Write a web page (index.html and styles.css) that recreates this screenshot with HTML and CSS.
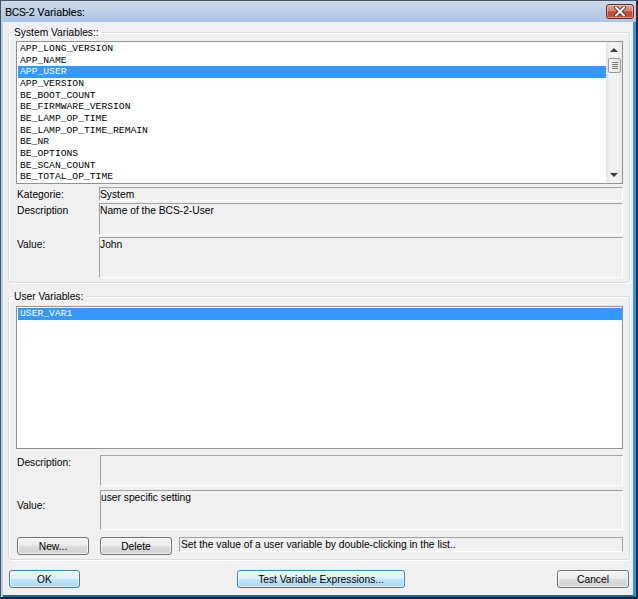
FILE: index.html
```html
<!DOCTYPE html>
<html>
<head>
<meta charset="utf-8">
<link rel="stylesheet" href="styles.css">
</head>
<body>
<div class="window">
  <div class="titlebar">
    <span class="title">BCS-2 Variables:</span>
    <span class="close">
      <svg width="12" height="11" viewBox="0 0 12 11">
        <path d="M2 1.5 L10 9.5 M10 1.5 L2 9.5" stroke="#4b1f18" stroke-width="3.6" stroke-linecap="square"/>
        <path d="M2 1.5 L10 9.5 M10 1.5 L2 9.5" stroke="#ffffff" stroke-width="2" stroke-linecap="square"/>
      </svg>
    </span>
  </div>
  <div class="client">
    <fieldset class="group group-sys">
      <legend>System Variables::</legend>
      <div class="listbox">
        <ul class="rows">
          <li>APP_LONG_VERSION</li>
          <li>APP_NAME</li>
          <li class="sel">APP_USER</li>
          <li>APP_VERSION</li>
          <li>BE_BOOT_COUNT</li>
          <li>BE_FIRMWARE_VERSION</li>
          <li>BE_LAMP_OP_TIME</li>
          <li>BE_LAMP_OP_TIME_REMAIN</li>
          <li>BE_NR</li>
          <li>BE_OPTIONS</li>
          <li>BE_SCAN_COUNT</li>
          <li>BE_TOTAL_OP_TIME</li>
        </ul>
        <div class="vscroll">
          <div class="sb-btn">
            <svg width="16" height="16" viewBox="0 0 16 16"><path d="M4 10 L8 6 L12 10 Z" fill="#3c3c3c"/></svg>
          </div>
          <div class="thumb">
            <svg width="8" height="9" viewBox="0 0 8 9">
              <path d="M1 1.5 H7 M1 3.5 H7 M1 5.5 H7 M1 7.5 H7" stroke="#7a7a7a" stroke-width="1"/>
            </svg>
          </div>
          <div class="track"></div>
          <div class="sb-btn">
            <svg width="16" height="16" viewBox="0 0 16 16"><path d="M4 6 L8 10 L12 6 Z" fill="#3c3c3c"/></svg>
          </div>
        </div>
      </div>
      <div class="props props-sys">
        <span class="lbl">Kategorie:</span>
        <div class="field">System</div>
        <span class="lbl">Description</span>
        <div class="field">Name of the BCS-2-User</div>
        <span class="lbl">Value:</span>
        <div class="field">John</div>
      </div>
    </fieldset>

    <fieldset class="group group-user">
      <legend>User Variables:</legend>
      <div class="listbox">
        <ul class="rows">
          <li class="sel">USER_VAR1</li>
        </ul>
      </div>
      <div class="props props-user">
        <span class="lbl">Description:</span>
        <div class="field"></div>
        <span class="lbl lbl-mid">Value:</span>
        <div class="field">user specific setting</div>
      </div>
      <div class="actions">
        <button class="btn btn-small">New...</button>
        <button class="btn btn-small">Delete</button>
        <div class="field hint">Set the value of a user variable by double-clicking in the list..</div>
      </div>
    </fieldset>

    <div class="dialog-buttons">
      <button class="btn btn-default btn-ok">OK</button>
      <button class="btn btn-default btn-test">Test Variable Expressions...</button>
      <button class="btn btn-cancel">Cancel</button>
    </div>
  </div>
</div>
</body>
</html>
```

FILE: styles.css
```css
* { box-sizing: border-box; }

html, body {
  margin: 0;
  padding: 0;
}

body {
  width: 638px;
  height: 599px;
  overflow: hidden;
  background: #ffffff;
  font-family: "Liberation Sans", Arial, sans-serif;
  font-size: 10.25px;
  color: #000000;
}

.window {
  width: 638px;
  height: 599px;
  display: flex;
  flex-direction: column;
  background: #b9cfe7;
  border: 1px solid #44566a;
  border-right: 2px solid #1a2c3e;
  border-bottom: 2px solid #15283b;
}

/* ---------- title bar ---------- */
.titlebar {
  flex: none;
  height: 21px;
  display: flex;
  justify-content: space-between;
  align-items: flex-start;
  padding: 0 2px 0 4px;
  background: linear-gradient(#cddbea 0%, #bdd1e7 45%, #aac5e3 100%);
}

.title {
  font-family: Roboto, "Liberation Sans", sans-serif;
  font-size: 11.5px;
  line-height: 21px;
  padding-top: 1px;
  letter-spacing: -0.3px;
  color: #000000;
}

.close {
  margin-top: 3px;
  width: 28px;
  height: 15px;
  display: flex;
  align-items: center;
  justify-content: center;
  border: 1px solid #6d2b22;
  border-radius: 3px;
  background: linear-gradient(#e6a596 0%, #d9806f 45%, #c4473a 52%, #c9553f 100%);
  box-shadow: inset 0 0 0 1px rgba(255, 225, 215, 0.45);
}

/* ---------- client area ---------- */
.client {
  flex: 1;
  margin-left: 2px;
  display: flex;
  flex-direction: column;
  background: #f0f0f0;
  border-right: 3px solid #2b97e2;
  border-bottom: 2px solid #23628f;
}

.group {
  margin: 4px 3px 0 5px;
  padding: 2px 6px 4px 7px;
  min-width: 0;
  border: 1px solid #d5dfe5;
  border-radius: 3px;
  box-shadow: inset 1px 1px 0 #ffffff, 1px 1px 0 #ffffff;
}

.group-user {
  margin-top: 7px;
  padding: 3px 6px 4px 7px;
}

.group legend {
  margin-left: -4px;
  padding: 0 2px;
  line-height: 13px;
  color: #000000;
}

/* ---------- list boxes ---------- */
.listbox {
  height: 143px;
  display: flex;
  background: #ffffff;
  border: 1px solid #8f9298;
}

.rows {
  flex: 1;
  margin: 0;
  padding: 1px 0 0 1px;
  list-style: none;
  overflow: hidden;
  font-family: "Liberation Mono", "Courier New", monospace;
  font-size: 9.7px;
}

.rows li {
  height: 11.67px;
  line-height: 11.67px;
  padding-left: 2px;
  white-space: nowrap;
  color: #000000;
}

.rows li.sel {
  background: #3399ff;
  color: #ffffff;
}

.vscroll {
  width: 16px;
  flex: none;
  display: flex;
  flex-direction: column;
  background: linear-gradient(to right, #e4e4e4 0%, #f1f1f1 25%, #f1f1f1 75%, #e9e9e9 100%);
}

.sb-btn {
  height: 16px;
  flex: none;
  display: flex;
}

.thumb {
  height: 15px;
  flex: none;
  margin: 0 1px 0 2px;
  display: flex;
  align-items: center;
  justify-content: center;
  border: 1px solid #9a9a9a;
  border-radius: 2px;
  background: linear-gradient(to right, #f6f6f6, #e2e2e2);
}

.track { flex: 1; }

/* ---------- property fields ---------- */
.props {
  display: grid;
  column-gap: 0;
}

.props-sys {
  margin-top: 3px;
  grid-template-columns: 83px 1fr;
  grid-template-rows: 14px 32px 41px;
  row-gap: 2px;
}

.props-user {
  margin-top: 6px;
  grid-template-columns: 84px 1fr;
  grid-template-rows: 31px 40px;
  row-gap: 4px;
}

.lbl {
  padding: 1px 0 0 1px;
  line-height: 13px;
  white-space: nowrap;
}

.lbl-mid { padding-top: 9px; }

.field {
  line-height: 13px;
  white-space: nowrap;
  overflow: hidden;
  border-top: 1px solid #a0a0a0;
  border-left: 1px solid #a0a0a0;
  border-bottom: 1px solid #ffffff;
  border-right: 1px solid #ffffff;
  background: #f0f0f0;
}

/* ---------- actions row ---------- */
.actions {
  margin-top: 7px;
  display: flex;
  align-items: flex-start;
}

.btn {
  height: 18px;
  padding: 0;
  font-family: "Liberation Sans", Arial, sans-serif;
  font-size: 10.25px;
  color: #000000;
  border: 1px solid #707070;
  border-radius: 3px;
  background: linear-gradient(#f2f2f2 0%, #ebebeb 50%, #dddddd 51%, #cfcfcf 100%);
  box-shadow: inset 0 0 0 1px rgba(255, 255, 255, 0.7);
}

.btn-small {
  width: 72px;
  margin-left: 1px;
}

.btn-small + .btn-small { margin-left: 11px; }

.hint {
  flex: 1;
  margin-left: 7px;
  height: 15px;
  padding-left: 1px;
  border-right-color: #a0a0a0;
}

/* ---------- dialog buttons ---------- */
.dialog-buttons {
  margin-top: 10px;
  padding: 0 4px 0 6px;
  display: flex;
}

.btn-default {
  border-color: #3c7fb1;
  background: linear-gradient(#eaf6fd 0%, #d9f0fc 50%, #bee6fd 51%, #a7d9f5 100%);
  box-shadow: inset 0 0 0 1px rgba(255, 255, 255, 0.55);
}

.btn-ok { width: 71px; }

.btn-test {
  width: 168px;
  margin-left: 157px;
}

.btn-cancel {
  width: 72px;
  margin-left: auto;
}
```
